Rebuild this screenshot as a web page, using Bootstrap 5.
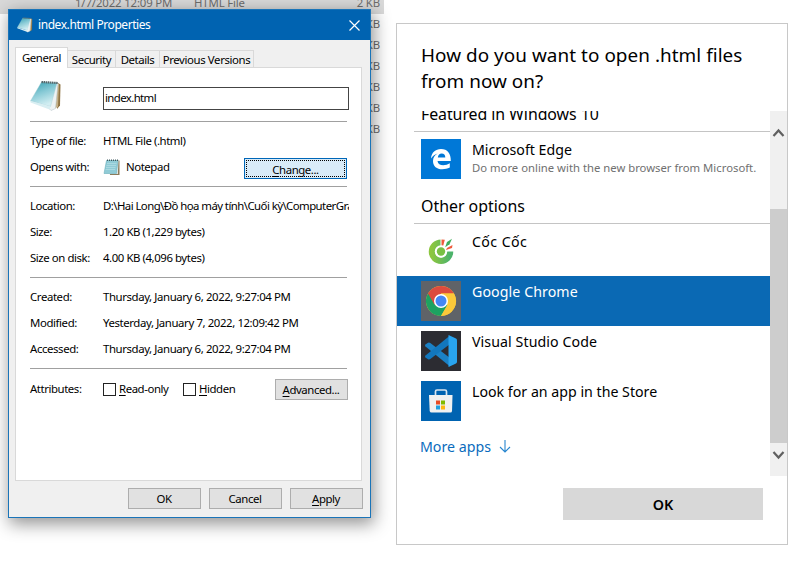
<!DOCTYPE html>
<html lang="en">
<head>
<meta charset="utf-8">
<meta name="viewport" content="width=device-width, initial-scale=1">
<title>index.html Properties</title>
<link rel="stylesheet" href="https://cdn.jsdelivr.net/npm/bootstrap@5.3.0/dist/css/bootstrap.min.css">
<style>
body{font-family:"Noto Sans","Open Sans",sans-serif;background:#fff;color:#000;font-size:11.4px;line-height:16px}
.desktop{width:803px;height:565px}
.t{white-space:pre}
/* file list behind the dialogs */
.explorer{width:384px;color:#6d6d6d;font-size:11.4px;letter-spacing:-.15px}
.file-row{height:21px;line-height:20px;padding-right:4px}
.file-first{height:14px;background:#d9d9d9}
.file-first span{line-height:21px;margin-top:-8px}
.f-date{margin-left:75px;width:119px}
/* properties window */
.props{left:8px;top:9px;width:363px;height:509px;border:1px solid #1a74b8;background:#f0f0f0;box-shadow:2px 5px 16px 1px rgba(0,0,0,.42);letter-spacing:-.43px}
.titlebar{height:30px;background:#0063b1;color:#fff;padding:0 10px 0 8px;font-size:12px}
.tabs{height:28px;padding:7px 0 0 6px}
.tab-i{height:18px;border:1px solid #d9d9d9;border-left:0;border-bottom:0;line-height:18px;text-align:center}
.tab-on{height:21px;background:#fff;border-left:1px solid #d9d9d9;z-index:1;line-height:19px}
.w-gen{width:53px}.w-sec{width:48px}.w-det{width:44px}.w-prev{width:94px;letter-spacing:-.38px}
.panel{margin:-1px 8px 0 6px;height:414px;border:1px solid #d9d9d9;background:#fff;padding:0 12px 0 14px}
.rule{height:1px;background:#a0a0a0;margin-right:2px}
.grp{padding:6px 0}
.kv{height:26px}
.kv>:first-child{width:73px}
.path{width:246px;letter-spacing:-.56px}
.stamp{letter-spacing:-.4px}
.name-row{height:53px}
.name-pic{width:73px;padding-top:12px}
.name-box{width:246px;height:23px;border:1px solid #444;padding-left:1px;line-height:19px;margin-top:19px;letter-spacing:-.6px}
.wbtn{background:#e1e1e1;border:1px solid #adadad;height:21px;width:73px;line-height:20px;text-align:center;padding-right:1px}
.wbtn-focus{background:#d9ebf8;border:1px solid #0067b8;width:103px;height:21px;padding:1px;margin:3px 2px 0 auto}
.wbtn-focus>div{border:1px dotted #000;height:17px;line-height:17px}
.attrs{margin-top:7px}
.read-only{width:64px}
.adv{margin:1px 1px 0 auto}
.actions{margin-top:7px;padding-right:7px}
.cb{width:13px;height:13px;border:1px solid #222;background:#fff;margin-right:3px}
u{text-underline-offset:2px;text-decoration-thickness:1px;text-decoration-skip-ink:none}
/* open-with window */
.chooser{left:396px;top:23px;width:392px;height:522px;border:1px solid #c8c8c8;background:#fff}
.ask{font-size:18.9px;letter-spacing:.05px;line-height:26px;padding:18px 0 0 24px;height:87px}
.scroller{height:365px}
.sec{font-size:15.9px;height:39px;line-height:44px;padding-left:24px}
.sec-cut{height:20px;line-height:20px}
.sec-cut span{margin-top:-7px;letter-spacing:-.06px}
.thin{height:1px;background:#c4c4c4;margin-left:17px}
.app{height:50px;padding:5px 0 0 24px;font-size:14.2px}
.app .nm{line-height:20px;margin-top:1px}
.app .wide{letter-spacing:.08px}
.app .coc{letter-spacing:.4px}
.app .ds{font-size:11.3px;color:#707070;line-height:16px}
.first-app{margin-top:2px}
.app-on{background:#0a69b4;color:#fff}
.ico{width:40px;height:40px;margin-right:11px}
.ico svg{display:block}
.more{color:#0a6cbd;font-size:14.2px;height:41px;padding-left:23px}
.bar{width:17px;background:#f0f0f0}
.thumb{background:#cdcdcd;height:234px}
.ar{height:98px;padding-top:17px}
.ar2{height:33px;padding-top:7px}
.okbtn{width:200px;height:32px;background:#d8d8d8;margin:12px 24px 0 auto;font-size:14.3px;font-weight:600;line-height:33px;text-align:center}
</style>
<script src="https://cdn.jsdelivr.net/npm/bootstrap@5.3.0/dist/js/bootstrap.bundle.min.js"></script>
</head>
<body>
<svg width="0" height="0" class="position-absolute"><defs>
<linearGradient id="pg" x1="0" y1="0" x2=".4" y2="1"><stop offset="0" stop-color="#2f9cae"/><stop offset=".5" stop-color="#86c9d5"/><stop offset="1" stop-color="#d2eef2"/></linearGradient>
<linearGradient id="cg" x1="0" y1="0" x2="1" y2="0"><stop offset="0" stop-color="#8cc63f"/><stop offset="1" stop-color="#4db36b"/></linearGradient>
<symbol id="pad" viewBox="0 0 32 32"><path d="M28 3l2.500 1.500-.5 21-3 3.500z" fill="#8f7444"/><path d="M27 3l2 1-1 23-5 2z" fill="#c5b087"/><path d="M25 3l3 .5-2.500 25-4.500 2-4-4z" fill="#eef3f4" stroke="#b5c1c4" stroke-width=".5"/><path d="M11.500 2L27 3l-6.500 23.500L.5 21z" fill="url(#pg)" stroke="#a4cdd5" stroke-width=".4"/><path d="M.5 21l20 5.500-1 3L.5 22.500z" fill="#d8eef2"/><path d="M11.500 2L28 3" stroke="#56686c" stroke-width="2.200" stroke-dasharray="1.500 .6"/></symbol>
</defs></svg>
<main class="desktop position-relative overflow-hidden">
  <div class="explorer">
    <div class="file-first d-flex overflow-hidden pe-1"><span class="f-date t">1/7/2022 12:09 PM</span><span>HTML File</span><span class="ms-auto">2 KB</span></div>
    <div class="file-row text-end">1 KB</div><div class="file-row text-end">1 KB</div><div class="file-row text-end">1 KB</div><div class="file-row text-end">1 KB</div><div class="file-row text-end">1 KB</div><div class="file-row text-end">1 KB</div>
  </div>

  <section class="props position-absolute">
    <div class="titlebar d-flex align-items-center">
      <svg width="17" height="17"><use href="#pad" width="16" height="16"/></svg>
      <span class="t ms-1">index.html Properties</span>
      <svg class="ms-auto" width="11" height="11" stroke="#fff" stroke-width="1.200"><path d="M.5 .5l10 10M10.500 .5l-10 10"/></svg>
    </div>
    <div class="tabs d-flex align-items-end">
      <div class="tab-i tab-on position-relative w-gen">General</div>
      <div class="tab-i w-sec">Security</div>
      <div class="tab-i w-det">Details</div>
      <div class="tab-i w-prev">Previous Versions</div>
    </div>
    <div class="panel">
      <div class="d-flex name-row">
        <div class="name-pic"><svg width="33" height="32" class="d-block"><use href="#pad" width="32" height="32"/></svg></div>
        <div class="name-box t">index.html</div>
      </div>
      <div class="rule"></div>
      <div class="grp">
        <div class="kv d-flex align-items-center"><span>Type of file:</span><span>HTML File (.html)</span></div>
        <div class="kv d-flex align-items-center"><span>Opens with:</span>
          <svg width="19" height="17" class="me-1" viewBox="0 0 19 17"><path d="M5 1.500h11.500V16H7z" fill="#8b7b5b"/><path d="M4 1.500h11.500L14.800 15H3z" fill="#f2f6f6"/><path d="M3.500 1.500h11.500l-1.500 13H1z" fill="#90cbd6" stroke="#5aa6b4" stroke-width=".5"/><path d="M4 4.500h9.500M3.500 6.500h9.500M3 8.500h9.500M2.500 10.500h9.500" stroke="#bce3ea" stroke-width=".6"/><path d="M4 1.200h11.500" stroke="#405a60" stroke-width="1.500" stroke-dasharray="1 1"/></svg><span>Notepad</span>
          <div class="wbtn wbtn-focus"><div><u>C</u>hange...</div></div></div>
      </div>
      <div class="rule"></div>
      <div class="grp">
        <div class="kv d-flex align-items-center"><span class="flex-shrink-0">Location:</span><span class="t overflow-hidden path">D:\Hai Long\Đồ họa máy tính\Cuối kỳ\ComputerGra</span></div>
        <div class="kv d-flex align-items-center"><span>Size:</span><span>1.20 KB (1,229 bytes)</span></div>
        <div class="kv d-flex align-items-center"><span>Size on disk:</span><span>4.00 KB (4,096 bytes)</span></div>
      </div>
      <div class="rule"></div>
      <div class="grp stamp">
        <div class="kv d-flex align-items-center"><span>Created:</span><span>Thursday, January 6, 2022, 9:27:04 PM</span></div>
        <div class="kv d-flex align-items-center"><span>Modified:</span><span>Yesterday, January 7, 2022, 12:09:42 PM</span></div>
        <div class="kv d-flex align-items-center"><span>Accessed:</span><span>Thursday, January 6, 2022, 9:27:04 PM</span></div>
      </div>
      <div class="rule"></div>
      <div class="kv d-flex align-items-center attrs"><span>Attributes:</span>
        <i class="cb"></i><span class="read-only"><u>R</u>ead-only</span><i class="cb"></i><span><u>H</u>idden</span>
        <div class="wbtn adv"><u>A</u>dvanced...</div></div>
    </div>
    <div class="d-flex justify-content-end gap-2 actions"><div class="wbtn">OK</div><div class="wbtn">Cancel</div><div class="wbtn"><u>A</u>pply</div></div>
  </section>

  <section class="chooser position-absolute">
    <div class="ask">How do you want to open .html files<br>from now on?</div>
    <div class="scroller d-flex overflow-hidden">
      <div class="flex-grow-1">
        <div class="sec sec-cut d-flex overflow-hidden"><span>Featured in Windows 10</span></div>
        <div class="thin"></div>
        <div class="app d-flex first-app"><div class="ico"><svg width="40" height="40"><path fill="#0078d7" d="M0 0h40v40H0z"/><path fill="#fff" d="M10 19.500C10.500 13.500 14.500 10 20 10c6.500 0 10 4.500 9.800 12H16.500c.3 3 2.700 4.200 5.700 4.200 2.400 0 4.700-.7 6.600-1.900v4.300c-2.300 1.200-4.800 1.700-7.500 1.700-5.500 0-9.300-3-9.300-8.300 0-3.400 1.900-6 4.700-7.500-2.600.7-5 2.400-6.700 5zm6.800-.9h7.500c0-2.600-1.300-4-3.600-4-2.100 0-3.500 1.600-3.900 4z"/></svg></div>
          <div><div class="nm">Microsoft Edge</div><div class="ds t">Do more online with the new browser from Microsoft.</div></div></div>
        <div class="sec">Other options</div>
        <div class="thin"></div>
        <div class="app d-flex first-app"><div class="ico"><svg width="40" height="40"><path d="M20 11.700A9 9 0 1 0 29 20.500" fill="none" stroke="url(#cg)" stroke-width="6.500"/><circle cx="20" cy="20.500" r="6.200" fill="#fff"/><circle cx="20" cy="20.500" r="4.200" fill="#79c043"/><path d="M19.500 7.500h5l-2 7.500h-3z" fill="#fff"/><path d="M20.500 8.500l3.300.2-1.500 5.800-1.800-.3z" fill="#ef5b3c"/><path d="M31 7.800l-2.500 5.400-4.300 3 1.800-5.200z" fill="#3fae5c"/><path d="M31.500 14l-.5 3-6 2 1-2z" fill="#ef5b3c"/></svg></div><div class="nm coc">Cốc Cốc</div></div>
        <div class="app app-on d-flex"><div class="ico"><svg width="40" height="40"><path fill="#5f6368" d="M0 0h40v40H0z"/><circle cx="20" cy="20" r="15" fill="#fbc93a"/><path d="M20 20L7 12.500A15 15 0 0 0 20 35l6.500-11.300z" fill="#1da261"/><path d="M7 12.500A15 15 0 0 1 33 12.500H20L13.500 23.800z" fill="#dc4b3e"/><path d="M20 12.500h13A15 15 0 0 1 20 35l6.500-11z" fill="#fbc93a"/><circle cx="20" cy="20" r="7" fill="#fff"/><circle cx="20" cy="20" r="5.500" fill="#4587f3"/></svg></div><div class="nm wide">Google Chrome</div></div>
        <div class="app d-flex"><div class="ico"><svg width="40" height="40"><path fill="#2c2c32" d="M0 0h40v40H0z"/><path d="M4.500 13.500L7 11.700q1.200-.6 2.300.2L29 27v8.500L4.500 15.500q-1-1 0-2z" fill="#1b81c5"/><path d="M4.500 26.500L7 28.300q1.200.6 2.300-.2L29 13V4.500L4.500 24.500q-1 1 0 2z" fill="#1277bd"/><path d="M27.500 4l7.500 3.500q1 .6 1 1.700v21.600q0 1.100-1 1.700L27.500 36z" fill="#29a4ef"/></svg></div><div class="nm wide">Visual Studio Code</div></div>
        <div class="app d-flex"><div class="ico"><svg width="40" height="40"><path fill="#0063b1" d="M0 0h40v40H0z"/><path d="M14.500 15v-4.500q0-1.500 1.500-1.500h8q1.500 0 1.500 1.500V15" fill="none" stroke="#d9e5ef" stroke-width="1.700"/><path d="M8 14h23.500l-.5 16q-.1 1.500-1.500 1.500H10.500Q9 31.500 8.700 30z" fill="#f1f1f1"/><path fill="#e84c25" d="M15 19.500h4v4h-4z"/><path fill="#7fba00" d="M20 19.500h4v4h-4z"/><path fill="#20a0e0" d="M15 24.500h4v4h-4z"/><path fill="#fcb813" d="M20 24.500h4v4h-4z"/></svg></div><div class="nm">Look for an app in the Store</div></div>
        <div class="more d-flex align-items-center"><span>More apps</span><svg class="ms-2" width="12" height="13" fill="none" stroke="#2786cf" stroke-width="1.100"><path d="M6 0v12M1 7l5 5 5-5"/></svg></div>
      </div>
      <div class="bar flex-shrink-0"><div class="ar"><svg class="d-block mx-auto" width="13" height="10" fill="none" stroke="#606060" stroke-width="2.200"><path d="M1.500 8l5-5.500 5 5.500"/></svg></div><div class="thumb"></div><div class="ar2"><svg class="d-block mx-auto" width="13" height="10" fill="none" stroke="#606060" stroke-width="2.200"><path d="M1.500 2l5 5.500 5-5.500"/></svg></div></div>
    </div>
    <div class="okbtn">OK</div>
  </section>
</main>
</body>
</html>
